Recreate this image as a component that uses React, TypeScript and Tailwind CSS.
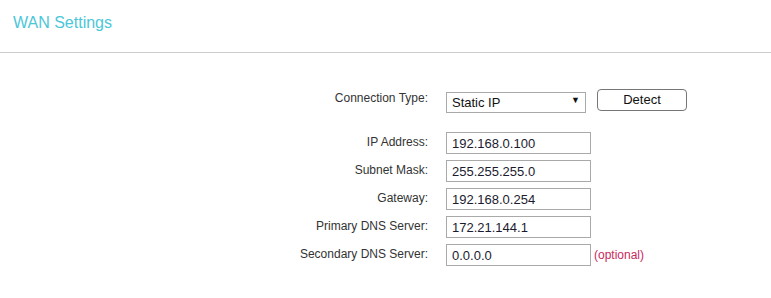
import React from 'react';

const fields = [
  { label: 'IP Address:', value: '192.168.0.100' },
  { label: 'Subnet Mask:', value: '255.255.255.0' },
  { label: 'Gateway:', value: '192.168.0.254' },
  { label: 'Primary DNS Server:', value: '172.21.144.1' },
  { label: 'Secondary DNS Server:', value: '0.0.0.0', optional: true },
];

const App = () => {
  return (
    <div className="w-[771px] h-[298px] bg-white font-['Liberation_Sans',Arial,sans-serif] overflow-hidden">
      <div className="h-[53px] border-b border-[#cccccc] pl-[13px] pt-[13px]">
        <h1 className="text-[16px] leading-[20px] text-[#4cc7d9]">WAN Settings</h1>
      </div>

      <div className="pt-[36px]">
        <div className="flex items-center h-[23px]">
          <label className="w-[428px] text-right text-[12px] text-[#333333] pb-[6px]">Connection Type:</label>
          <div className="relative ml-[18px] mt-[3px]">
            <select className="appearance-none w-[140px] h-[21px] border border-[#a9a9a9] bg-white pl-[5px] text-[13px] text-[#111111] outline-none">
              <option>Static IP</option>
            </select>
            <span className="pointer-events-none absolute right-[6px] top-[4px] text-[9px] text-[#111111]">▼</span>
          </div>
          <button className="ml-[11px] mb-[1px] w-[90px] h-[22px] rounded-[4px] border border-[#767676] bg-white text-[13px] text-[#111111]">
            Detect
          </button>
        </div>

        <div className="mt-[20px] flex flex-col gap-[6px]">
          {fields.map((f) => (
            <div key={f.label} className="flex items-center h-[22px]">
              <label className="w-[428px] text-right text-[12px] text-[#333333] pb-[3px]">{f.label}</label>
              <input
                readOnly
                value={f.value}
                className="ml-[18px] w-[145px] h-[22px] border border-[#a9a9a9] bg-white px-[5px] text-[13px] text-[#1b1b2f] outline-none"
              />
              {f.optional && <span className="ml-[3px] text-[12px] text-[#c8285e]">(optional)</span>}
            </div>
          ))}
        </div>
      </div>
    </div>
  );
};

export default App;
